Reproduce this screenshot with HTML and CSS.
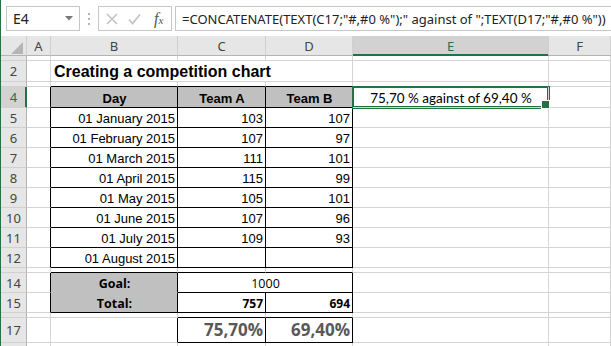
FILE: index.html
```html
<!DOCTYPE html>
<html lang="en">
<head>
    <meta charset="UTF-8">
    <meta name="viewport" content="width=device-width, initial-scale=1.0">
    <title>Competition chart</title>
    <link rel="stylesheet" href="styles.css">
</head>
<body>
<div class="app">
    <div class="fbar">
        <div class="namebox">
            <span>E4</span>
            <svg class="drop" width="8" height="5" viewBox="0 0 8 5"><polygon points="0,0 8,0 4,4.5" fill="#777"/></svg>
        </div>
        <div class="grip"><i></i><i></i><i></i></div>
        <div class="tools">
            <svg class="ico" width="12" height="12" viewBox="0 0 12 12"><path d="M1 1 L11 11 M11 1 L1 11" stroke="#c4c4c4" stroke-width="1.6" fill="none"/></svg>
            <svg class="ico ok" width="13" height="12" viewBox="0 0 13 12"><path d="M1 6.5 L4.5 10.5 L12 1.5" stroke="#c4c4c4" stroke-width="1.8" fill="none"/></svg>
            <span class="fx">f<small>x</small></span>
        </div>
        <div class="formula">=CONCATENATE(TEXT(C17;"#,#0 %");" against of ";TEXT(D17;"#,#0 %"))</div>
    </div>

    <div class="sheet">
        <!-- column headers -->
        <div class="ch corner"><svg width="12" height="12" viewBox="0 0 12 12"><polygon points="12,0 12,12 0,12" fill="#b5b5b5"/></svg></div>
        <div class="ch">A</div>
        <div class="ch">B</div>
        <div class="ch">C</div>
        <div class="ch">D</div>
        <div class="ch on">E</div>
        <div class="ch">F</div>

        <!-- row 1 (hidden) -->
        <div class="rh"></div><div class="c"></div><div class="c"></div><div class="c"></div><div class="c"></div><div class="c"></div><div class="c"></div>

        <!-- row 2 -->
        <div class="rh">2</div>
        <div class="c"></div>
        <div class="c title">Creating a competition chart</div>
        <div class="c"></div>
        <div class="c"></div>

        <!-- row 3 (hidden) -->
        <div class="rh"></div><div class="c"></div><div class="c kb"></div><div class="c kb"></div><div class="c kb"></div><div class="c"></div><div class="c"></div>

        <!-- row 4 -->
        <div class="rh on">4</div>
        <div class="c kr"></div>
        <div class="c kr kb gf m hb">Day</div>
        <div class="c kr kb gf m hb">Team A</div>
        <div class="c kr kb gf m hb">Team B</div>
        <div class="c pick">75,70 % against of 69,40 %</div>
        <div class="c"></div>

        <div class="rh">5</div><div class="c kr"></div>
        <div class="c kr kb r">01 January 2015</div><div class="c kr kb r">103</div><div class="c kr kb r">107</div>
        <div class="c"></div><div class="c"></div>

        <div class="rh">6</div><div class="c kr"></div>
        <div class="c kr kb r">01 February 2015</div><div class="c kr kb r">107</div><div class="c kr kb r">97</div>
        <div class="c"></div><div class="c"></div>

        <div class="rh">7</div><div class="c kr"></div>
        <div class="c kr kb r">01 March 2015</div><div class="c kr kb r">111</div><div class="c kr kb r">101</div>
        <div class="c"></div><div class="c"></div>

        <div class="rh">8</div><div class="c kr"></div>
        <div class="c kr kb r">01 April 2015</div><div class="c kr kb r">115</div><div class="c kr kb r">99</div>
        <div class="c"></div><div class="c"></div>

        <div class="rh">9</div><div class="c kr"></div>
        <div class="c kr kb r">01 May 2015</div><div class="c kr kb r">105</div><div class="c kr kb r">101</div>
        <div class="c"></div><div class="c"></div>

        <div class="rh">10</div><div class="c kr"></div>
        <div class="c kr kb r">01 June 2015</div><div class="c kr kb r">107</div><div class="c kr kb r">96</div>
        <div class="c"></div><div class="c"></div>

        <div class="rh">11</div><div class="c kr"></div>
        <div class="c kr kb r">01 July 2015</div><div class="c kr kb r">109</div><div class="c kr kb r">93</div>
        <div class="c"></div><div class="c"></div>

        <div class="rh">12</div><div class="c kr"></div>
        <div class="c kr kb r">01 August 2015</div><div class="c kr kb"></div><div class="c kr kb"></div>
        <div class="c"></div><div class="c"></div>

        <!-- row 13 (hidden) -->
        <div class="rh"></div><div class="c"></div><div class="c kb"></div><div class="c kb"></div><div class="c kb"></div><div class="c"></div><div class="c"></div>

        <!-- row 14 -->
        <div class="rh">14</div>
        <div class="c kr"></div>
        <div class="c kr gf nb m tah hb">Goal:</div>
        <div class="c kr kb m tah wide">1000</div>
        <div class="c"></div>
        <div class="c"></div>

        <!-- row 15 -->
        <div class="rh">15</div>
        <div class="c kr"></div>
        <div class="c kr kb gf m tah hb">Total:</div>
        <div class="c kr kb r tah sm hb">757</div>
        <div class="c kr kb r tah sm hb">694</div>
        <div class="c"></div>
        <div class="c"></div>

        <!-- row 16 (hidden) -->
        <div class="rh"></div><div class="c"></div><div class="c"></div><div class="c kb"></div><div class="c kb"></div><div class="c"></div><div class="c"></div>

        <!-- row 17 -->
        <div class="rh">17</div>
        <div class="c"></div>
        <div class="c kr"></div>
        <div class="c kr kb r big">75,70%</div>
        <div class="c kr kb r big">69,40%</div>
        <div class="c"></div>
        <div class="c"></div>

        <!-- row 18, only its top edge shows -->
        <div class="rh"></div><div class="c"></div><div class="c"></div><div class="c"></div><div class="c"></div><div class="c"></div><div class="c"></div>
    </div>
</div>
</body>
</html>
```

FILE: styles.css
```css
* {
    margin: 0;
    padding: 0;
    box-sizing: border-box;
}

body {
    width: 611px;
    height: 346px;
    overflow: hidden;
    background: #fff;
    font-family: "Liberation Sans", Arial, sans-serif;
    color: #000;
}

.app {
    height: 100%;
    border-left: 1px solid #217346;
}

/* formula bar */
.fbar {
    display: flex;
    height: 36px;
    padding: 6px 0 5px 5px;
    font-family: "Noto Sans", sans-serif;
    color: #222;
}

.namebox {
    display: flex;
    align-items: center;
    width: 74px;
    padding: 0 6px;
    border: 1px solid #c6c6c6;
    font-size: 14px;
}

.drop {
    margin-left: auto;
}

.grip {
    display: flex;
    flex-direction: column;
    justify-content: center;
    gap: 3px;
    margin: 0 8px;
}

.grip i {
    display: block;
    width: 2px;
    height: 2px;
    background: #b4b4b4;
}

.tools {
    display: flex;
    align-items: center;
    width: 74px;
    padding-left: 7px;
    border: 1px solid #c6c6c6;
}

.ok {
    margin-left: 10px;
}

.fx {
    margin-left: 13px;
    font-family: "Liberation Serif", serif;
    font-style: italic;
    font-size: 16px;
    color: #555;
}

.fx small {
    font-size: 11px;
}

.formula {
    flex: 1;
    display: flex;
    align-items: center;
    margin: 0 -4px 0 3px;
    padding-left: 6px;
    border: 1px solid #c6c6c6;
    font-size: 13px;
    white-space: nowrap;
    overflow: hidden;
}

/* grid */
.sheet {
    display: grid;
    grid-template-columns: 26px 24px 127px 88px 87px 196px 1fr;
    grid-template-rows: 20px 5px 21px 5px 21px repeat(8, 20px) 5px 20px 20px 5px 25px 20px;
}

.ch,
.rh {
    display: flex;
    align-items: center;
    justify-content: center;
    overflow: hidden;
    background: #e6e6e6;
    border-right: 1px solid #d0d0d0;
    border-bottom: 1px solid #d0d0d0;
    font-family: "Noto Sans", sans-serif;
    font-size: 13px;
    color: #444;
}

.ch {
    border-bottom-color: #b4b4b4;
}

.rh {
    border-right-color: #b4b4b4;
}

.corner {
    align-items: flex-end;
    justify-content: flex-end;
    padding: 0 3px 1px 0;
}

.corner svg {
    display: block;
}

.ch.on,
.rh.on {
    background: #d2d2d2;
    color: #217346;
}

.ch.on {
    border-bottom-color: #217346;
    box-shadow: inset 0 -1px 0 #217346;
}

.rh.on {
    border-right-color: #217346;
    box-shadow: inset -1px 0 0 #217346;
}

.c {
    display: flex;
    align-items: flex-end;
    min-width: 0;
    padding: 0 2px 1px 3px;
    border-right: 1px solid #d4d4d4;
    border-bottom: 1px solid #d4d4d4;
    font-size: 13px;
    line-height: 15px;
    white-space: nowrap;
    overflow: hidden;
}

.title {
    grid-column: span 3;
    padding-bottom: 0;
    font-size: 16px;
    font-weight: bold;
    line-height: 18px;
}

.wide {
    grid-column: span 2;
}

.r {
    justify-content: flex-end;
}

.m {
    justify-content: center;
}

.hb {
    font-weight: bold;
}

.gf {
    background: #c0c0c0;
}

.kr {
    border-right-color: #000;
}

.kb {
    border-bottom-color: #000;
}

.nb {
    border-bottom-color: transparent;
}

.tah {
    font-family: "Open Sans", sans-serif;
    font-size: 12.5px;
}

.tah.sm {
    font-size: 12px;
}

.big {
    padding-bottom: 2px;
    font-family: "Open Sans", sans-serif;
    font-size: 17px;
    font-weight: bold;
    line-height: 20px;
    color: #595959;
}

/* selected cell */
.pick {
    position: relative;
    z-index: 1;
    justify-content: center;
    overflow: visible;
    box-shadow: 0 0 0 1px #217346, inset 0 0 0 1px #217346;
    font-family: Lato, sans-serif;
    font-size: 13.5px;
}

.pick::after {
    content: "";
    position: absolute;
    right: -2px;
    bottom: -2px;
    width: 7px;
    height: 7px;
    background: #217346;
    border: 1px solid #fff;
}
```
